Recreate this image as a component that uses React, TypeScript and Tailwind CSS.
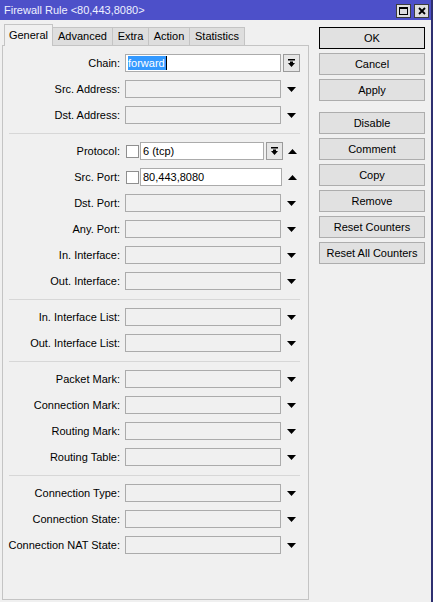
import React from "react";

type Trail = "down" | "up" | "none";

function Arrow({ dir }: { dir: "down" | "up" }) {
  return (
    <svg width="9" height="5" viewBox="0 0 9 5">
      {dir === "down" ? <polygon points="0,0 9,0 4.5,5" fill="#000" /> : <polygon points="0,5 9,5 4.5,0" fill="#000" />}
    </svg>
  );
}

function DropBtn() {
  return (
    <div className="w-[17px] h-[18px] ml-[2px] border border-[#9a9a9a] bg-[#e6e6e6] flex items-center justify-center">
      <svg width="7" height="8" viewBox="0 0 7 8">
        <rect x="0" y="0" width="7" height="1.5" fill="#000" />
        <rect x="2" y="2.5" width="3" height="1.5" fill="#000" />
        <polygon points="0,4 7,4 3.5,8" fill="#000" />
      </svg>
    </div>
  );
}

function Slot({ t }: { t: Trail }) {
  return <div className="w-[17px] ml-[2px] flex items-center justify-center">{t !== "none" && <Arrow dir={t} />}</div>;
}

function Row({ label }: { label: string }) {
  return (
    <div className="flex items-center h-[26px]">
      <div className="w-[117px] text-right whitespace-nowrap">{label}</div>
      <div className="ml-[5px] w-[156px] h-[18px] border border-[#ababab] bg-[#f0f0f0]" />
      <Slot t="down" />
    </div>
  );
}

function Sep() {
  return <div className="ml-[6px] w-[291px] h-px bg-[#d7d7d7] mt-[5px] mb-[4px]" />;
}

function Check() {
  return <div className="ml-[1px] w-[13px] h-[13px] border border-[#8f8f8f] bg-white shrink-0" />;
}

export default function App() {
  const tabs = [
    { n: "Advanced", w: "w-[61px]" },
    { n: "Extra", w: "w-[37px]" },
    { n: "Action", w: "w-[42px]" },
    { n: "Statistics", w: "w-[56px]" },
  ];
  const buttons1 = ["Cancel", "Apply"];
  const buttons2 = ["Disable", "Comment", "Copy", "Remove", "Reset Counters", "Reset All Counters"];

  return (
    <div className="w-[433px] h-[602px] bg-[#f0f0f0] flex flex-col overflow-hidden text-[11px] text-black font-['Liberation_Sans',Arial,sans-serif] border-r-2 border-[#2e3070]">
      {/* title bar */}
      <div className="h-[20px] bg-[#4d50c9] flex items-center pl-[4px] pr-[4px] -mr-[2px]">
        <span className="text-[#eef0ff] text-[11px]">Firewall Rule &lt;80,443,8080&gt;</span>
        <div className="ml-auto flex gap-[3px] mt-[2px]">
          <div className="w-[15px] h-[14px] bg-[#dedede] border border-[#3c3c3c] flex items-center justify-center">
            <div className="w-[9px] h-[8px] border border-black border-t-2" />
          </div>
          <div className="w-[15px] h-[14px] bg-[#dedede] border border-[#3c3c3c] flex items-center justify-center">
            <svg width="8" height="8" viewBox="0 0 8 8">
              <path d="M1 1 L7 7 M7 1 L1 7" stroke="#000" strokeWidth="1.8" />
            </svg>
          </div>
        </div>
      </div>

      <div className="flex flex-1 pl-[2px]">
        {/* left column */}
        <div className="w-[307px] flex flex-col">
          <div className="h-[22px] mt-[4px] -mb-px flex items-end pl-[2px] relative z-10">
            <div className="w-[49px] h-[22px] bg-[#f0f0f0] border border-b-0 border-[#c4c4c4] flex items-center justify-center pb-[1px]">General</div>
            {tabs.map((t) => (
              <div key={t.n} className={`${t.w} h-[19px] -ml-px bg-[#dedede] border border-[#c4c4c4] flex items-center justify-center`}>
                {t.n}
              </div>
            ))}
          </div>
          <div className="flex-1 mb-[2px] border border-[#c4c4c4] bg-[#f0f0f0] pt-[4px]">
            <div className="flex items-center h-[26px]">
              <div className="w-[117px] text-right">Chain:</div>
              <div className="ml-[5px] w-[156px] h-[18px] border border-[#ababab] bg-white flex items-center pl-[2px]">
                <span className="bg-[#3399ff] text-white leading-[14px] pr-[1px]">forward</span>
                <span className="w-px h-[14px] bg-black" />
              </div>
              <DropBtn />
            </div>
            <Row label="Src. Address:" />
            <Row label="Dst. Address:" />
            <Sep />
            <div className="flex items-center h-[26px]">
              <div className="w-[117px] text-right">Protocol:</div>
              <div className="ml-[5px] flex items-center">
                <Check />
                <div className="ml-[1px] w-[124px] h-[18px] border border-[#ababab] bg-white flex items-center pl-[2px]">6 (tcp)</div>
                <DropBtn />
              </div>
              <div className="w-[17px] ml-[1px] flex items-center justify-center">
                <Arrow dir="up" />
              </div>
            </div>
            <div className="flex items-center h-[26px]">
              <div className="w-[117px] text-right">Src. Port:</div>
              <div className="ml-[5px] flex items-center">
                <Check />
                <div className="ml-[1px] w-[142px] h-[18px] border border-[#ababab] bg-white flex items-center pl-[2px]">80,443,8080</div>
              </div>
              <Slot t="up" />
            </div>
            <Row label="Dst. Port:" />
            <Row label="Any. Port:" />
            <Row label="In. Interface:" />
            <Row label="Out. Interface:" />
            <Sep />
            <Row label="In. Interface List:" />
            <Row label="Out. Interface List:" />
            <Sep />
            <Row label="Packet Mark:" />
            <Row label="Connection Mark:" />
            <Row label="Routing Mark:" />
            <Row label="Routing Table:" />
            <Sep />
            <Row label="Connection Type:" />
            <Row label="Connection State:" />
            <Row label="Connection NAT State:" />
          </div>
        </div>

        {/* buttons */}
        <div className="ml-[10px] pt-[7px] flex flex-col gap-[4px] w-[106px]">
          <div className="h-[22px] border border-black bg-[#e1e1e1] flex items-center justify-center">OK</div>
          {buttons1.map((b) => (
            <div key={b} className="h-[22px] border border-[#adadad] bg-[#e1e1e1] flex items-center justify-center">
              {b}
            </div>
          ))}
          <div className="h-[3px]" />
          {buttons2.map((b) => (
            <div key={b} className="h-[22px] border border-[#adadad] bg-[#e1e1e1] flex items-center justify-center">
              {b}
            </div>
          ))}
        </div>
      </div>
    </div>
  );
}
